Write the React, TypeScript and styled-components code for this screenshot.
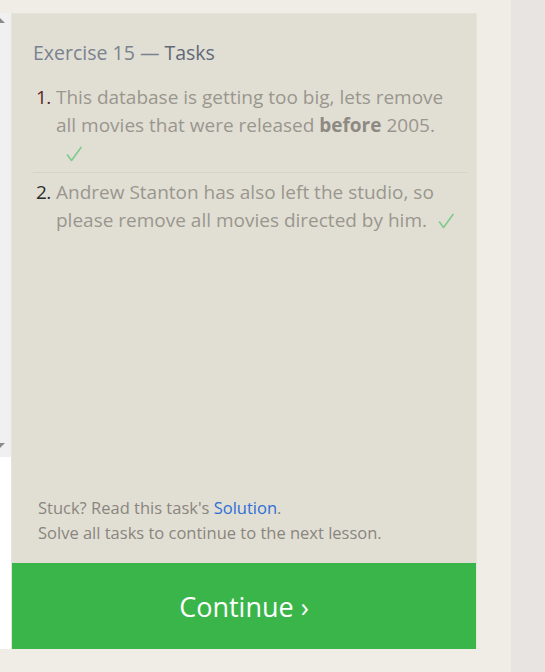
import React from "react";
import styled, { createGlobalStyle } from "styled-components";

const Global = createGlobalStyle`
  html, body { margin: 0; padding: 0; }
  body {
    background: #efede6;
    font-family: "Open Sans", "Noto Sans", sans-serif;
    width: 545px;
    height: 672px;
    overflow: hidden;
  }
`;

const Page = styled.div`
  display: flex;
  width: 545px;
  height: 672px;
`;

const Workspace = styled.div`
  display: flex;
  padding-top: 13px;
  height: 636px;
`;

const Editor = styled.div`
  width: 11px;
  display: flex;
  flex-direction: column;
`;

const ScrollTrack = styled.div`
  position: relative;
  height: 444px;
  background: #f0f0f0;
`;

const Arrow = styled.div<{ $down?: boolean }>`
  position: absolute;
  left: 0;
  width: 0;
  height: 0;
  border-right: 5px solid transparent;
  ${(p) =>
    p.$down
      ? `bottom: 9px; border-top: 5px solid #8a8a8a;`
      : `top: 5px; border-bottom: 5px solid #8a8a8a;`}
`;

const EditorBody = styled.div`
  flex: 1;
  background: #ffffff;
`;

const Panel = styled.div`
  width: 466px;
  display: flex;
  flex-direction: column;
  background: #e1dfd4;
  box-shadow: inset 0 0 0 1px #e6e4da;
`;

const Content = styled.div`
  flex: 1;
  display: flex;
  flex-direction: column;
  padding: 27px 10px 0 22px;
`;

const Title = styled.h2`
  margin: 0;
  font-weight: 400;
  font-size: 19.5px;
  line-height: 26px;
  color: #7a8290;
  span { color: #626977; }
`;

const List = styled.ol`
  list-style: none;
  margin: 17px 0 0 0;
  padding: 0;
`;

const Item = styled.li<{ $last?: boolean }>`
  display: flex;
  padding-bottom: ${(p) => (p.$last ? "0" : "5px")};
  margin-bottom: 5px;
  border-bottom: ${(p) => (p.$last ? "none" : "1px solid #d6d4c9")};
`;

const Num = styled.span<{ $c: string }>`
  width: 23px;
  padding-left: 3px;
  box-sizing: border-box;
  flex-shrink: 0;
  font-size: 19px;
  line-height: 28px;
  color: ${(p) => p.$c};
  letter-spacing: -0.6px;
`;

const Text = styled.p`
  margin: 0;
  font-size: 19px;
  line-height: 28px;
  color: #9a968e;
  b { font-weight: 700; color: #8e8a83; }
`;

const CheckMark = styled.svg<{ $indent: number }>`
  display: inline-block;
  vertical-align: -2px;
  margin-left: ${(p) => p.$indent}px;
`;

const Check = ({ indent }: { indent: number }) => (
  <CheckMark $indent={indent} width="16" height="16" viewBox="0 0 16 16">
    <polyline
      points="1.5,9 5.5,14.5 15,1.5"
      fill="none"
      stroke="#7fca8c"
      strokeWidth="1.6"
      strokeLinejoin="round"
      strokeLinecap="round"
    />
  </CheckMark>
);

const Footer = styled.div`
  margin-top: auto;
  padding: 0 0 18px 5px;
  font-size: 16.5px;
  line-height: 25px;
  color: #8a857e;
  a { color: #2e6ed6; text-decoration: none; }
`;

const ContinueButton = styled.button`
  height: 86px;
  border: none;
  margin: 0 1px;
  background: #3ab54a;
  color: #ffffff;
  font-family: "Open Sans", "Noto Sans", sans-serif;
  font-size: 27px;
  padding: 0;
  cursor: pointer;
`;

const Gutter = styled.div`
  width: 34px;
`;

const SideStrip = styled.div`
  flex: 1;
  background: #e8e4e1;
`;

export default function App() {
  return (
    <>
      <Global />
      <Page>
        <Workspace>
          <Editor>
            <ScrollTrack>
              <Arrow />
              <Arrow $down />
            </ScrollTrack>
            <EditorBody />
          </Editor>
          <Panel>
            <Content>
              <Title>
                Exercise 15 — <span>Tasks</span>
              </Title>
              <List>
                <Item>
                  <Num $c="#5a2626">1.</Num>
                  <Text>
                    This database is getting too big, lets remove all movies that were released{" "}
                    <b>before</b> 2005.
                    <br />
                    <Check indent={10} />
                  </Text>
                </Item>
                <Item $last>
                  <Num $c="#2a2a2a">2.</Num>
                  <Text>
                    Andrew Stanton has also left the studio, so please remove all movies directed by him.
                    <Check indent={11} />
                  </Text>
                </Item>
              </List>
              <Footer>
                Stuck? Read this task's <a href="#">Solution</a>.
                <br />
                Solve all tasks to continue to the next lesson.
              </Footer>
            </Content>
            <ContinueButton>Continue ›</ContinueButton>
          </Panel>
          <Gutter />
        </Workspace>
        <SideStrip />
      </Page>
    </>
  );
}
